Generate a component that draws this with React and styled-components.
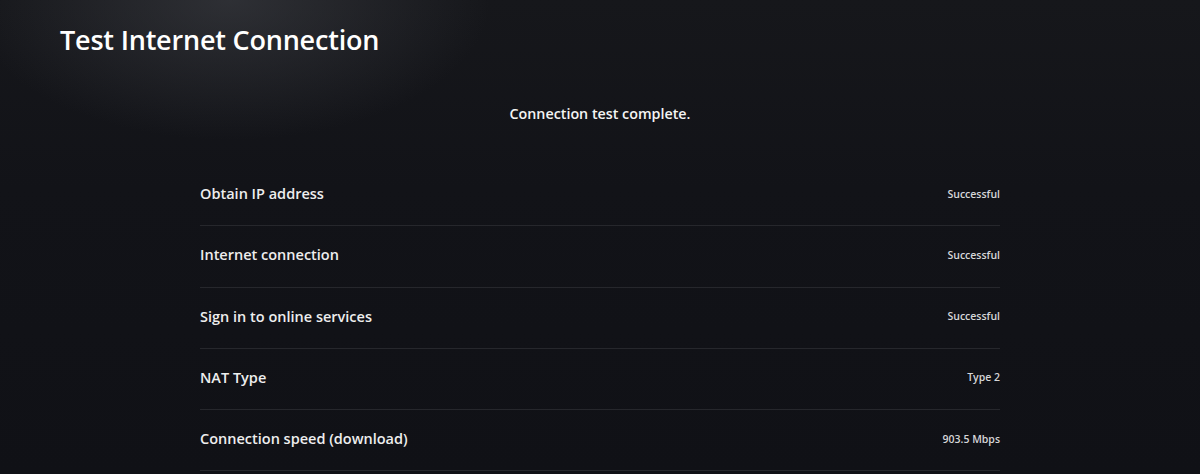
import React from 'react';
import styled, { createGlobalStyle } from 'styled-components';

const results = [
  { label: 'Obtain IP address', value: 'Successful' },
  { label: 'Internet connection', value: 'Successful' },
  { label: 'Sign in to online services', value: 'Successful' },
  { label: 'NAT Type', value: 'Type 2' },
  { label: 'Connection speed (download)', value: '903.5 Mbps' },
];

const GlobalStyle = createGlobalStyle`
  html, body {
    margin: 0;
    padding: 0;
    background: #111217;
  }
  body {
    font-family: "Open Sans", "Noto Sans", sans-serif;
    color: #f2f2f2;
    -webkit-font-smoothing: antialiased;
  }
`;

const Screen = styled.div`
  width: 1200px;
  height: 474px;
  overflow: hidden;
  box-sizing: border-box;
  padding: 23px 0 0 60px;
  background:
    radial-gradient(ellipse 260px 140px at 230px 0px, rgba(70, 72, 78, 0.5), rgba(40, 42, 48, 0) 100%),
    linear-gradient(180deg, #16171b 0%, #121318 40%, #101116 100%);
`;

const Title = styled.h1`
  margin: 0;
  font-size: 27px;
  font-weight: 600;
  line-height: 34px;
  letter-spacing: -0.2px;
  color: #ffffff;
`;

const Content = styled.div`
  width: 800px;
  margin: 0 0 0 140px;
  display: flex;
  flex-direction: column;
`;

const Status = styled.p`
  margin: 47px 0 0;
  text-align: center;
  font-size: 14.3px;
  font-weight: 600;
  line-height: 20px;
  color: #f4f4f4;
`;

const List = styled.div`
  margin-top: 41px;
  display: flex;
  flex-direction: column;
`;

const Row = styled.div`
  height: 61.25px;
  display: flex;
  align-items: center;
  justify-content: space-between;
  border-bottom: 1px solid #26272c;
  padding-bottom: 3px;
  box-sizing: border-box;
`;

const Label = styled.span`
  font-size: 14.5px;
  font-weight: 600;
  color: #eeeeee;
`;

const Value = styled.span`
  font-size: 10.5px;
  font-weight: 600;
  color: #d6d6d8;
`;

export default function App() {
  return (
    <>
      <GlobalStyle />
      <Screen>
        <Title>Test Internet Connection</Title>
        <Content>
          <Status>Connection test complete.</Status>
          <List>
            {results.map((r) => (
              <Row key={r.label}>
                <Label>{r.label}</Label>
                <Value>{r.value}</Value>
              </Row>
            ))}
          </List>
        </Content>
      </Screen>
    </>
  );
}
